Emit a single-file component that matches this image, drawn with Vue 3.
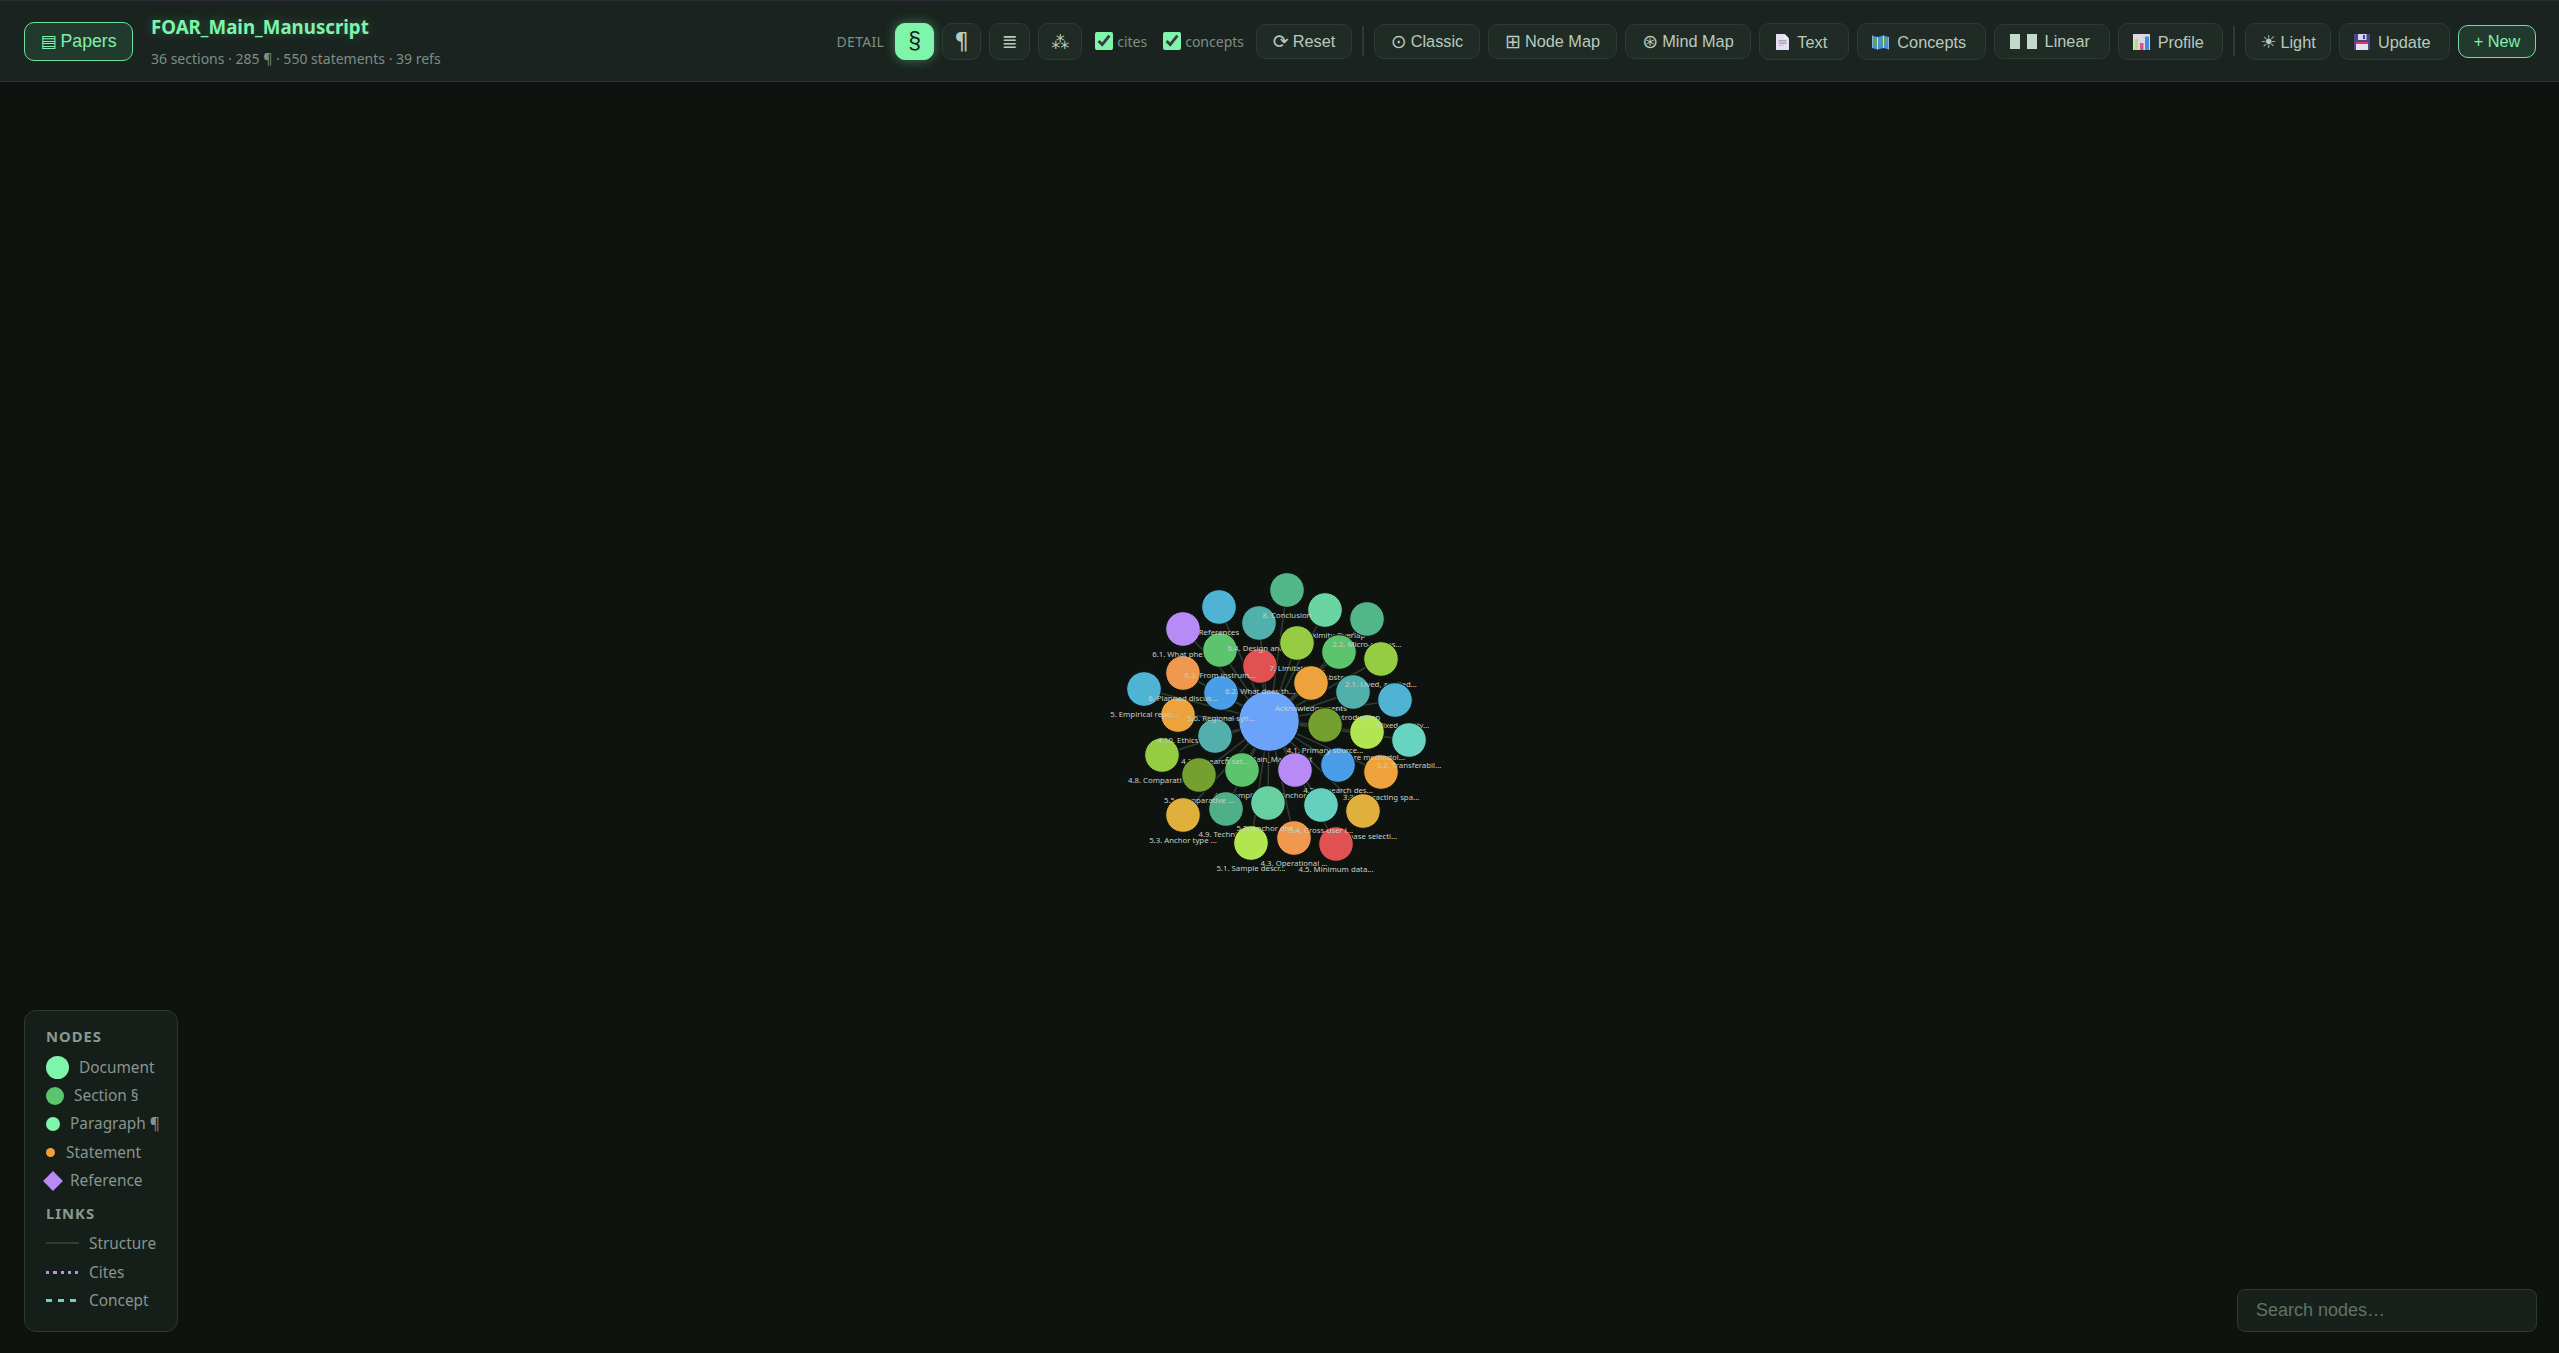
<script setup>
const ROOT = { x: 1269, y: 721 }

const raw = [
  [1269, 721, 30.3, '#6ba3fa', 'FOAR_Main_Manuscript'],
  [1162, 755, 17.3, '#95cc42', '4.8. Comparative...'],
  [1178, 715, 17.3, '#eda23c', '4.10. Ethics'],
  [1242, 770, 17.3, '#5cc46c', '4.6. Sampling...'],
  [1215, 736, 17.3, '#52b0ac', '4.7. Research set...'],
  [1226, 809, 17.3, '#4fb088', '4.9. Technical...'],
  [1199, 775, 17.3, '#74a030', '5.5. Comparative ...'],
  [1251, 843, 17.3, '#b2e650', '5.1. Sample descr...'],
  [1183, 815, 17.3, '#e0b03c', '5.3. Anchor type ...'],
  [1294, 838, 17.3, '#f0984e', '4.3. Operational ...'],
  [1295, 770, 17.3, '#b78af5', '4.4. Anchor sel...'],
  [1381, 772, 17.3, '#eda23c', '3.3. Interacting spa...'],
  [1363, 811, 17.3, '#e0b03c', '4.4. Phase selecti...'],
  [1336, 844, 17.3, '#e05252', '4.5. Minimum data...'],
  [1367, 732, 17.3, '#b2e650', '3.1. Core methodol...'],
  [1338, 765, 17.3, '#4a9ee8', '4.2. Research des...'],
  [1321, 805, 17.3, '#66d0c0', '5.4. Cross-user i...'],
  [1268, 803, 17.3, '#66d0a0', '5.2. Anchor dist...'],
  [1144, 689, 17.3, '#4fb3d4', '5. Empirical repo...'],
  [1221, 693, 17.3, '#4a9ee8', '5.6. Regional syn...'],
  [1260, 666, 17.3, '#e05252', '6.2. What does th...'],
  [1183, 673, 17.3, '#f0984e', '6. Planned discus...'],
  [1183, 629, 17.3, '#b78af5', '6.1. What phen...'],
  [1220, 650, 17.3, '#5cc46c', '6.3. From instrum...'],
  [1325, 610, 17.3, '#6ad4a0', '2.3. Proximity Overlap'],
  [1259, 623, 17.3, '#52b0ac', '6.4. Design and...'],
  [1297, 643, 17.3, '#95cc42', '7. Limitations...'],
  [1339, 652, 17.3, '#5cc46c', 'Abstract'],
  [1311, 683, 17.3, '#eda23c', 'Acknowledgements'],
  [1353, 692, 17.3, '#52b0ac', '1. Introduction'],
  [1219, 607, 17.3, '#4fb3d4', 'References'],
  [1287, 590, 17.3, '#52b788', '8. Conclusion'],
  [1367, 619, 17.3, '#52b788', '2.2. Micro-spaces...'],
  [1381, 659, 17.3, '#95cc42', '2.1. Lived, applied...'],
  [1395, 700, 17.3, '#4fb3d4', '1.1. Mixed-reality...'],
  [1325, 725, 17.3, '#74a030', '4.1. Primary source...'],
  [1409, 740, 17.3, '#66d4c0', '3.2. Transferabil...'],
]

const nodes = raw.map(([x, y, r, fill, label]) => ({ x, y, r, fill, label, ly: y + r + 10.5 }))
const links = nodes.slice(1)

const detailLevels = [
  { glyph: '§', cls: 'active sect', w: 'w39' },
  { glyph: '¶', cls: 'pil', w: 'w39' },
  { glyph: '≣', cls: 'small', w: 'w41' },
  { glyph: '⁂', cls: 'ast', w: 'w44' },
]
const viewsA = [
  { glyph: '⊙', label: 'Classic', w: 'b106' },
  { glyph: '⊞', label: 'Node Map', w: 'b129' },
  { glyph: '⊛', label: 'Mind Map', w: 'b126' },
]
const legendNodes = [
  { label: 'Document', cls: 'dot-doc' },
  { label: 'Section §', cls: 'dot-sec' },
  { label: 'Paragraph ¶', cls: 'dot-par' },
  { label: 'Statement', cls: 'dot-sta' },
  { label: 'Reference', cls: 'dot-ref' },
]
const legendLinks = [
  { label: 'Structure', cls: 'ln-structure' },
  { label: 'Cites', cls: 'ln-cites' },
  { label: 'Concept', cls: 'ln-concept' },
]
</script>

<template>
  <div class="page">
    <header class="bar">
      <button class="btn accent papers"><span class="g">▤</span>Papers</button>
      <div class="doc">
        <div class="title">FOAR_Main_Manuscript</div>
        <div class="meta">36 sections · 285 ¶ · 550 statements · 39 refs</div>
      </div>
      <div class="tools">
        <span class="detail">DETAIL</span>
        <button v-for="d in detailLevels" :key="d.glyph" class="lvl" :class="[d.cls, d.w]">{{ d.glyph }}</button>
        <label class="chk first"><input type="checkbox" checked />cites</label>
        <label class="chk last"><input type="checkbox" checked />concepts</label>
        <button class="btn b96"><span class="g">⟳</span>Reset</button>
        <i class="sep"></i>
        <button v-for="v in viewsA" :key="v.label" class="btn" :class="v.w"><span class="g">{{ v.glyph }}</span>{{ v.label }}</button>
        <button class="btn tall emoji b90">
          <svg class="emo" viewBox="0 0 13 16" width="13" height="16"><path d="M0 0h8.500l4.500 4.500V16H0z" fill="#e6e0f2"/><path d="M8.500 0L13 4.500H8.500z" fill="#f8f6fc"/><path d="M2.500 6h8v1.500h-8zM2.500 8.500h8V10h-8z" fill="#a9a5b6"/><path d="M2.500 11h5v1h-5z" fill="#bdb9c8"/></svg>Text
        </button>
        <button class="btn tall emoji b129">
          <svg class="emo" viewBox="0 0 17 16" width="17" height="16"><path d="M0 1.500l5.500 1.500 6-1.500 5.500 1.500v12.500l-5.500-1.500-6 1.500L0 14z" fill="#4b8fd6"/><path d="M2 4l3.500.500 1 3-1.500 2.500.500 2.500-2 .500-1.500-5zM9 4l5 .500 1.500 3-2.500 1-1 3.500-2-1 .500-3.500z" fill="#5fa85a"/><path d="M0 1.500V14M5.500 3v12.500M11.500 1.500V14M17 3v12.500" stroke="#c9d6e4" stroke-width="1"/></svg>Concepts
        </button>
        <button class="btn emoji b116">
          <svg class="emo" viewBox="0 0 27 15" width="27" height="15"><path d="M0 0h10v15H0zM17 0h10v15H17z" fill="#c3d9c9"/></svg>Linear
        </button>
        <button class="btn tall emoji b105">
          <svg class="emo" viewBox="0 0 17 16" width="17" height="16"><path d="M0 0h17v16H0z" fill="#dcd8e6"/><path d="M1.500 5h3.500v11H1.500z" fill="#b4e07a"/><path d="M7 9h3.500v7H7z" fill="#e0528f"/><path d="M12 2.500h4V16h-4z" fill="#3f8fd8"/></svg>Profile
        </button>
        <i class="sep"></i>
        <button class="btn tall b86"><span class="g sun">☀</span>Light</button>
        <button class="btn tall emoji b111">
          <svg class="emo" viewBox="0 0 16 16" width="16" height="16"><path d="M0 0h16v16H0z" fill="#4b4390"/><path d="M4 0h8.500v6H4z" fill="#d8d3e8"/><path d="M9 1h2v4H9z" fill="#4b4390"/><path d="M2 8h12v8H2z" fill="#e6e0f2"/><path d="M2 8h12v2H2z" fill="#d8405a"/></svg>Update
        </button>
        <button class="btn accent newb">+ New</button>
      </div>
    </header>

    <svg class="graph" viewBox="0 0 2559 1353" width="2559" height="1353">
      <line v-for="l in links" :key="'l' + l.label" :x1="ROOT.x" :y1="ROOT.y" :x2="l.x" :y2="l.y" class="link" />
      <g v-for="n in nodes" :key="n.label">
        <circle :cx="n.x" :cy="n.y" :r="n.r" :fill="n.fill" class="node" />
        <text :x="n.x" :y="n.ly" class="nlabel">{{ n.label }}</text>
      </g>
    </svg>

    <aside class="legend">
      <h4>NODES</h4>
      <div v-for="n in legendNodes" :key="n.label" class="row">
        <span :class="n.cls"></span>{{ n.label }}
      </div>
      <h4 class="links">LINKS</h4>
      <div v-for="l in legendLinks" :key="l.label" class="row lnk">
        <span :class="l.cls"></span>{{ l.label }}
      </div>
    </aside>

    <input class="search" placeholder="Search nodes…" />
  </div>
</template>

<style>
html, body { margin: 0; background: #0e130f; }
</style>

<style scoped>
.page {
  position: relative;
  width: 2559px;
  height: 1353px;
  overflow: hidden;
  background: #0e130f;
  font-family: "Noto Sans", sans-serif;
}
.bar {
  position: relative;
  z-index: 2;
  box-sizing: border-box;
  height: 82px;
  display: flex;
  align-items: center;
  padding: 0 23px 0 24px;
  background: #1a231f;
  border-top: 1px solid #2a2b35;
  border-bottom: 1px solid #2c3a31;
}
.btn {
  box-sizing: border-box;
  height: 35px;
  padding: 0;
  display: inline-flex;
  align-items: center;
  justify-content: center;
  gap: 4px;
  white-space: pre;
  font-family: "Liberation Sans", sans-serif;
  font-size: 16.3px;
  color: #b9c9bd;
  background: #212b25;
  border: 1px solid #2f3a32;
  border-radius: 10px;
}
.b86 { width: 86px; }
.b90 { width: 90px; }
.b96 { width: 96px; }
.b105 { width: 105px; }
.b106 { width: 106px; }
.b111 { width: 111px; }
.b116 { width: 116px; }
.b126 { width: 126px; }
.b129 { width: 129px; }
.btn .g {
  font-family: "DejaVu Sans", sans-serif;
  font-size: 19px;
  line-height: 1;
}
.btn .g.sun { font-size: 18px; }
.btn.tall { height: 37px; padding-top: 2px; }
.btn.emoji { gap: 8px; }
.emo { flex: none; }
.btn.accent {
  color: #7ff0aa;
  background: #223a2e;
  border: 1.5px solid #6fe09c;
}
.papers { height: 39px; width: 109px; font-size: 17.7px; }
.papers .g { font-size: 17px; }
.newb { height: 33px; width: 78px; }
.doc { margin-left: 18px; align-self: flex-start; padding-top: 12px; }
.title {
  font-size: 18.7px;
  font-weight: 700;
  line-height: 27px;
  color: #7df5aa;
  text-shadow: 0 0 12px rgba(125, 245, 170, 0.3);
}
.meta {
  margin-top: 10px;
  font-size: 14px;
  line-height: 18px;
  color: #7e8e84;
}
.tools {
  margin-left: auto;
  display: flex;
  align-items: center;
  gap: 8px;
}
.detail {
  font-size: 14px;
  letter-spacing: 0.3px;
  color: #7e8e84;
  margin-right: 3px;
}
.lvl {
  box-sizing: border-box;
  height: 37px;
  padding: 0;
  font-family: "Liberation Sans", sans-serif;
  font-size: 20px;
  color: #b9c9bd;
  background: #212b25;
  border: 1px solid #2f3a32;
  border-radius: 10px;
}
.lvl.small { font-size: 19px; font-family: "DejaVu Sans", sans-serif; }
.lvl.sect { font-size: 23px; }
.lvl.pil { font-size: 23px; font-family: "DejaVu Sans", sans-serif; }
.lvl.ast { font-size: 18px; font-family: "DejaVu Sans", sans-serif; }
.w39 { width: 39px; }
.w41 { width: 41px; }
.w44 { width: 44px; }
.lvl.active {
  color: #12201a;
  background: #7ff5ab;
  border-color: #7ff5ab;
  box-shadow: 0 0 12px rgba(127, 245, 171, 0.4);
}
.chk {
  display: inline-flex;
  align-items: center;
  gap: 4px;
  font-size: 14px;
  color: #7e8e84;
  margin-right: 8px;
}
.chk.first { margin-left: 5px; }
.chk.last { margin-right: 4px; }
.chk input {
  width: 18px;
  height: 18px;
  margin: 0;
  accent-color: #7ff5ab;
}
.sep {
  width: 2px;
  height: 30px;
  margin: 0 2px;
  background: #2f3a32;
}
.graph {
  position: absolute;
  inset: 0;
}
.link { stroke: #2f3d34; stroke-width: 1.5; }
.node { stroke: #0e130f; stroke-width: 1; }
.nlabel {
  font-family: "Noto Sans", sans-serif;
  font-size: 7.8px;
  text-anchor: middle;
  fill: #c5d0c8;
}
.legend {
  position: absolute;
  left: 24px;
  bottom: 21px;
  box-sizing: border-box;
  width: 154px;
  height: 322px;
  padding: 15px 21px;
  background: #161e1a;
  border: 1px solid #2c3a31;
  border-radius: 12px;
  font-size: 15.4px;
  color: #86968c;
}
.legend h4 {
  margin: 0 0 7px;
  font-size: 14.8px;
  line-height: 20px;
  font-weight: 700;
  letter-spacing: 1px;
  color: #8a9a8e;
}
.legend h4.links { margin: 8px 0 6px; }
.row {
  height: 28.4px;
  display: flex;
  align-items: center;
  gap: 10px;
  white-space: nowrap;
}
.row.lnk { height: 28.8px; }
.row span { flex: none; display: block; }
.dot-doc { width: 23px; height: 23px; border-radius: 50%; background: #7ff5ab; }
.dot-sec { width: 18px; height: 18px; border-radius: 50%; background: #5cc46c; }
.dot-par { width: 14px; height: 14px; border-radius: 50%; background: #7ff5ab; }
.dot-sta { width: 9px; height: 9px; border-radius: 50%; background: #eda23c; margin-right: 1px; }
.dot-ref { width: 14px; height: 14px; background: #b78af5; transform: rotate(45deg); }
.row.lnk span { width: 33px; }
.ln-structure { height: 2px; background: #2f3d34; }
.ln-cites {
  height: 3px;
  background: repeating-linear-gradient(90deg, #b78af5 0 3.3px, transparent 3.3px 7.3px);
}
.ln-concept {
  height: 3px;
  background: repeating-linear-gradient(90deg, #66d4c0 0 6px, transparent 6px 12px);
}
.search {
  position: absolute;
  right: 22px;
  bottom: 21px;
  box-sizing: border-box;
  width: 300px;
  height: 43px;
  padding: 0 18px;
  font-family: "Liberation Sans", sans-serif;
  font-size: 18px;
  color: #b9c9bd;
  background: #18201c;
  border: 1px solid #2c3a31;
  border-radius: 8px;
  outline: none;
}
.search::placeholder { color: #5f7366; opacity: 1; }
</style>
